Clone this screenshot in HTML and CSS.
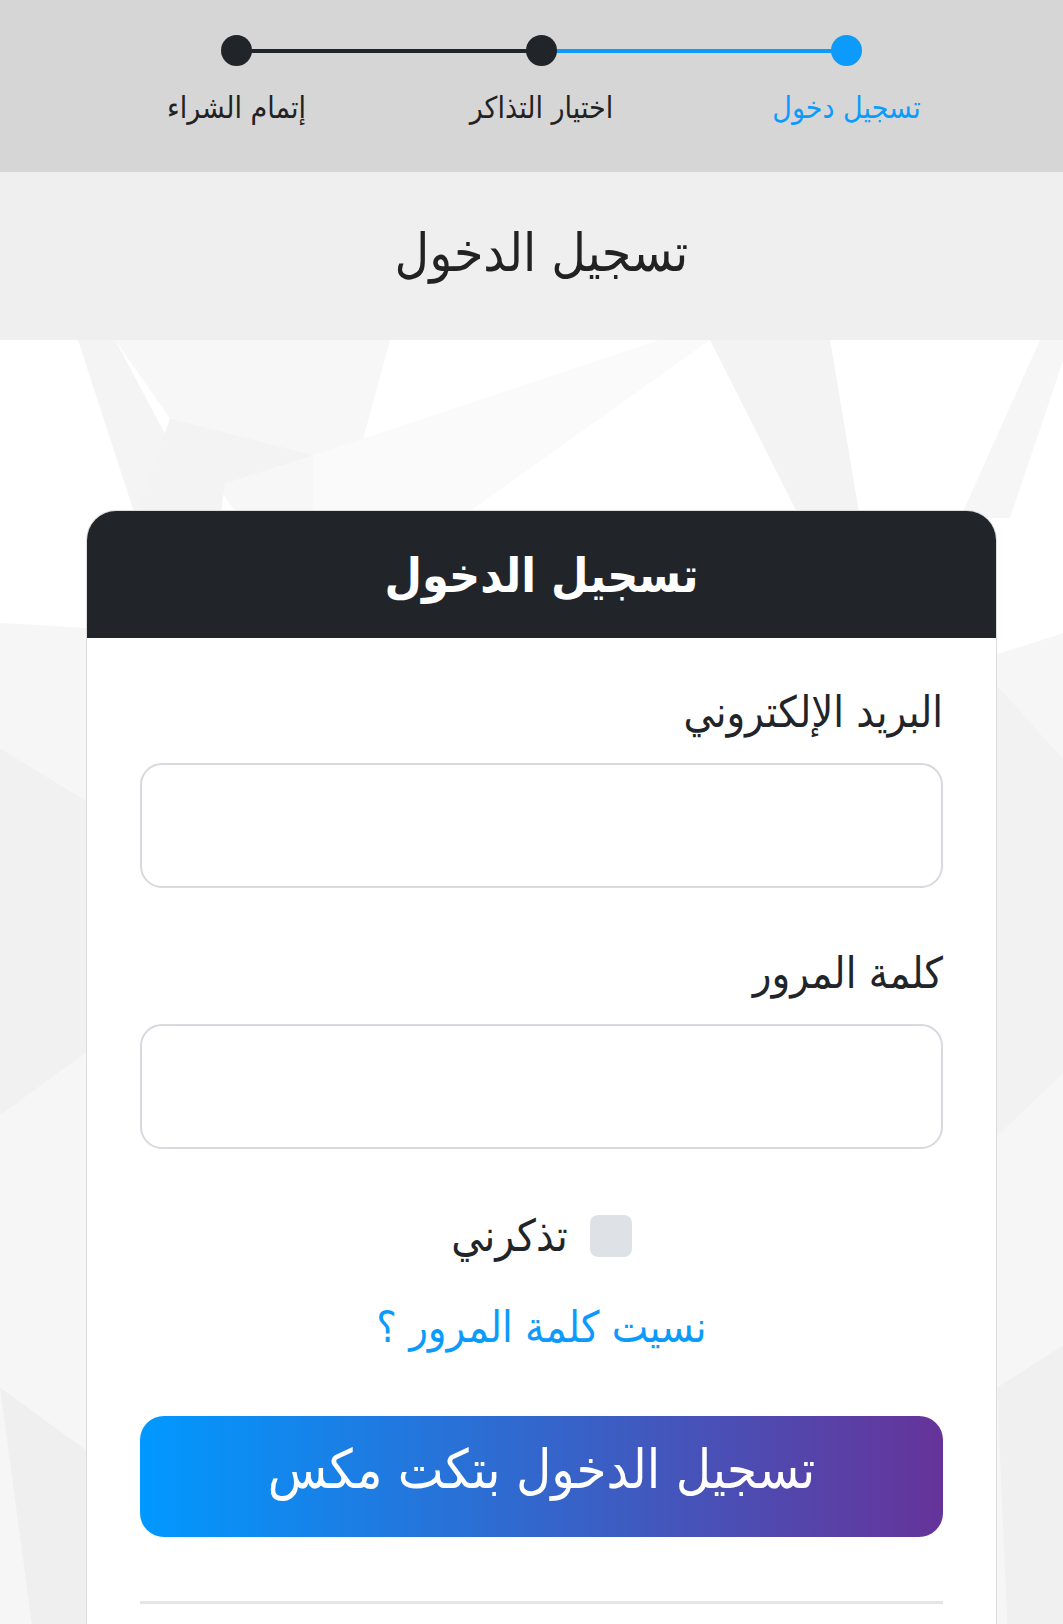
FILE: index.html
```html
<!DOCTYPE html>
<html lang="ar" dir="rtl">
<head>
<meta charset="utf-8">
<title>تسجيل الدخول</title>
<link rel="stylesheet" href="styles.css">
</head>
<body>
<header class="stepper">
  <ol class="steps">
    <li class="step step-active"><span class="dot"></span><span class="step-label">تسجيل دخول</span></li>
    <li class="step"><span class="dot"></span><span class="step-label">اختيار التذاكر</span></li>
    <li class="step step-last"><span class="dot"></span><span class="step-label">إتمام الشراء</span></li>
  </ol>
</header>
<section class="title-band">
  <h1 class="page-title">تسجيل الدخول</h1>
</section>
<main class="stage">
  <svg class="bg-shapes" viewBox="0 0 1063 1284" preserveAspectRatio="none" aria-hidden="true">
    <polygon points="78,0 115,0 172,102 168,102 136,170" fill="#f4f4f4"/>
    <polygon points="115,0 390,0 313,270 170,75" fill="#f7f7f7"/>
    <polygon points="170,75 313,110 225,137 220,170 136,170" fill="#f3f3f3"/>
    <polygon points="313,110 660,0 710,0 313,270" fill="#fafafa"/>
    <polygon points="710,0 830,0 860,170 800,170" fill="#f3f3f3"/>
    <polygon points="1063,20 1063,0 1040,0 960,170 1010,170" fill="#f6f6f6"/>
    <polygon points="0,270 86,275 86,1284 0,1284" fill="#f6f6f6"/>
    <polygon points="0,390 86,440 86,680 0,740" fill="#f1f1f1"/>
    <polygon points="0,1000 86,1060 86,1284 40,1284" fill="#efefef"/>
    <polygon points="997,300 1063,280 1063,1284 997,1284" fill="#f6f6f6"/>
    <polygon points="997,330 1063,400 1063,700 997,760" fill="#f2f2f2"/>
    <polygon points="997,1000 1063,960 1063,1284 1010,1284" fill="#f0f0f0"/>
  </svg>
  <div class="card">
    <div class="card-head">تسجيل الدخول</div>
    <form class="card-body">
      <label class="field-label" for="email">البريد الإلكتروني</label>
      <input class="field" id="email" type="email">
      <label class="field-label" for="password">كلمة المرور</label>
      <input class="field" id="password" type="password">
      <label class="remember"><span class="check"></span><span>تذكرني</span></label>
      <a class="forgot" href="#">نسيت كلمة المرور ؟</a>
      <button class="submit" type="button">تسجيل الدخول بتكت مكس</button>
      <hr class="divider">
    </form>
  </div>
</main>
</body>
</html>
```
FILE: styles.css
```css
* { box-sizing: border-box; }
html, body { margin: 0; padding: 0; }
body {
  font-family: "DejaVu Sans Condensed", "DejaVu Sans", sans-serif;
  color: #212529;
  background: #ffffff;
  width: 1063px;
  overflow: hidden;
}
.stepper {
  background: #d6d6d6;
  height: 172px;
  padding: 35px 0 0 20px;
}
.steps {
  list-style: none;
  margin: 0 auto;
  padding: 0;
  width: 915px;
  display: grid;
  grid-template-columns: repeat(3, 1fr);
}
.step {
  position: relative;
  display: flex;
  flex-direction: column;
  align-items: center;
  gap: 22px;
}
.step::after {
  content: "";
  position: absolute;
  top: 14px;
  right: 50%;
  width: 100%;
  height: 4px;
  background: #212529;
}
.step-active::after { background: #0d9bfb; }
.step-last::after { display: none; }
.dot {
  position: relative;
  z-index: 1;
  width: 31px;
  height: 31px;
  border-radius: 50%;
  background: #212529;
}
.step-active .dot { background: #0d9bfb; }
.step-label {
  font-size: 30px;
  line-height: 40px;
  color: #222;
}
.step-active .step-label { color: #0d9bfb; }

.title-band {
  background: #efefef;
  height: 168px;
  display: flex;
  align-items: center;
  justify-content: center;
  padding: 0 0 8px 20px;
}
.page-title {
  margin: 0;
  font-weight: normal;
  font-size: 53px;
  color: #222;
}

.stage {
  position: relative;
  padding: 170px 66px 0 86px;
  min-height: 1284px;
}
.bg-shapes {
  position: absolute;
  inset: 0;
  width: 100%;
  height: 100%;
  z-index: 0;
}
.card {
  position: relative;
  z-index: 1;
  background: #fff;
  border: 1px solid #dcdcdc;
  border-radius: 30px 30px 0 0;
  overflow: hidden;
}
.card-head {
  background: #212529;
  color: #fff;
  height: 127px;
  display: flex;
  align-items: center;
  justify-content: center;
  font-size: 48px;
  font-weight: bold;
}
.card-body {
  display: flex;
  flex-direction: column;
  padding: 49px 53px 80px 53px;
}
.field-label {
  font-size: 43px;
  line-height: 50px;
  color: #212529;
  margin-bottom: 26px;
}
.field {
  height: 125px;
  border: 2px solid #d6d9dd;
  border-radius: 22px;
  background: #fff;
  margin-bottom: 60px;
  font: inherit;
}
.remember {
  display: flex;
  align-self: center;
  align-items: center;
  gap: 22px;
  font-size: 44px;
  line-height: 50px;
  margin-top: 2px;
}
.check {
  width: 42px;
  height: 42px;
  border-radius: 8px;
  background: #dee2e6;
}
.forgot {
  align-self: center;
  color: #0d9bfb;
  text-decoration: none;
  font-size: 43px;
  line-height: 56px;
  margin-top: 38px;
}
.submit {
  margin-top: 61px;
  height: 121px;
  padding: 0 0 14px 0;
  border: 0;
  border-radius: 24px;
  background: linear-gradient(to right, #0099ff, #663399);
  color: #fff;
  font: inherit;
  font-size: 54px;
}
.divider {
  margin: 64px 0 0 0;
  border: 0;
  border-top: 3px solid #e6e6e6;
}
```
